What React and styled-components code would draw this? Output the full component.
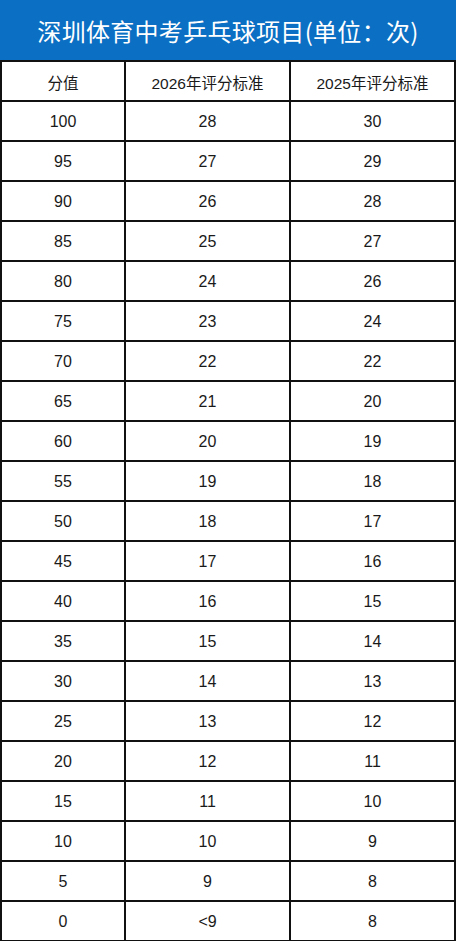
import { Fragment } from "react";
import styled, { createGlobalStyle } from "styled-components";

const GlobalStyle = createGlobalStyle`
  body {
    margin: 0;
    background: #fff;
    font-family: "Liberation Sans", "Noto Sans CJK SC", sans-serif;
  }
`

const Page = styled.div`
  width: 456px;
`
const Title = styled.div`
  height: 60px;
  background: #0b6fc3;
  color: #fff;
  display: flex;
  align-items: center;
  justify-content: center;
  font-family: "Noto Sans CJK SC", sans-serif;
  font-size: 24px;
  letter-spacing: 0.3px;
`
const Table = styled.div`
  display: grid;
  grid-template-columns: 126px 165px 165px;
  grid-auto-rows: 40px;
  border-top: 2px solid #111;
`
const Cell = styled.div`
  display: flex;
  align-items: center;
  justify-content: center;
  border-right: 2px solid #111;
  border-bottom: 2px solid #111;
  border-left: ${(p) => (p.$first ? "2px solid #111" : "none")};
  font-size: ${(p) => (p.$head ? "15.5px" : "16px")};
  color: #1a1a1a;
  padding-top: 1px;
`

const rows = [
  [100, 28, 30],
  [95, 27, 29],
  [90, 26, 28],
  [85, 25, 27],
  [80, 24, 26],
  [75, 23, 24],
  [70, 22, 22],
  [65, 21, 20],
  [60, 20, 19],
  [55, 19, 18],
  [50, 18, 17],
  [45, 17, 16],
  [40, 16, 15],
  [35, 15, 14],
  [30, 14, 13],
  [25, 13, 12],
  [20, 12, 11],
  [15, 11, 10],
  [10, 10, 9],
  [5, 9, 8],
  [0, "<9", 8],
]

const App = () => {
  return (
    <Page>
      <GlobalStyle />
      <Title>深圳体育中考乒乓球项目(单位：次)</Title>
      <Table>
        <Cell $first $head>分值</Cell>
        <Cell $head>2026年评分标准</Cell>
        <Cell $head>2025年评分标准</Cell>
        {rows.map((r) => (
          <Fragment key={r[0]}>
            <Cell $first>{r[0]}</Cell>
            <Cell>{r[1]}</Cell>
            <Cell>{r[2]}</Cell>
          </Fragment>
        ))}
      </Table>
    </Page>
  )
}

export default App;
